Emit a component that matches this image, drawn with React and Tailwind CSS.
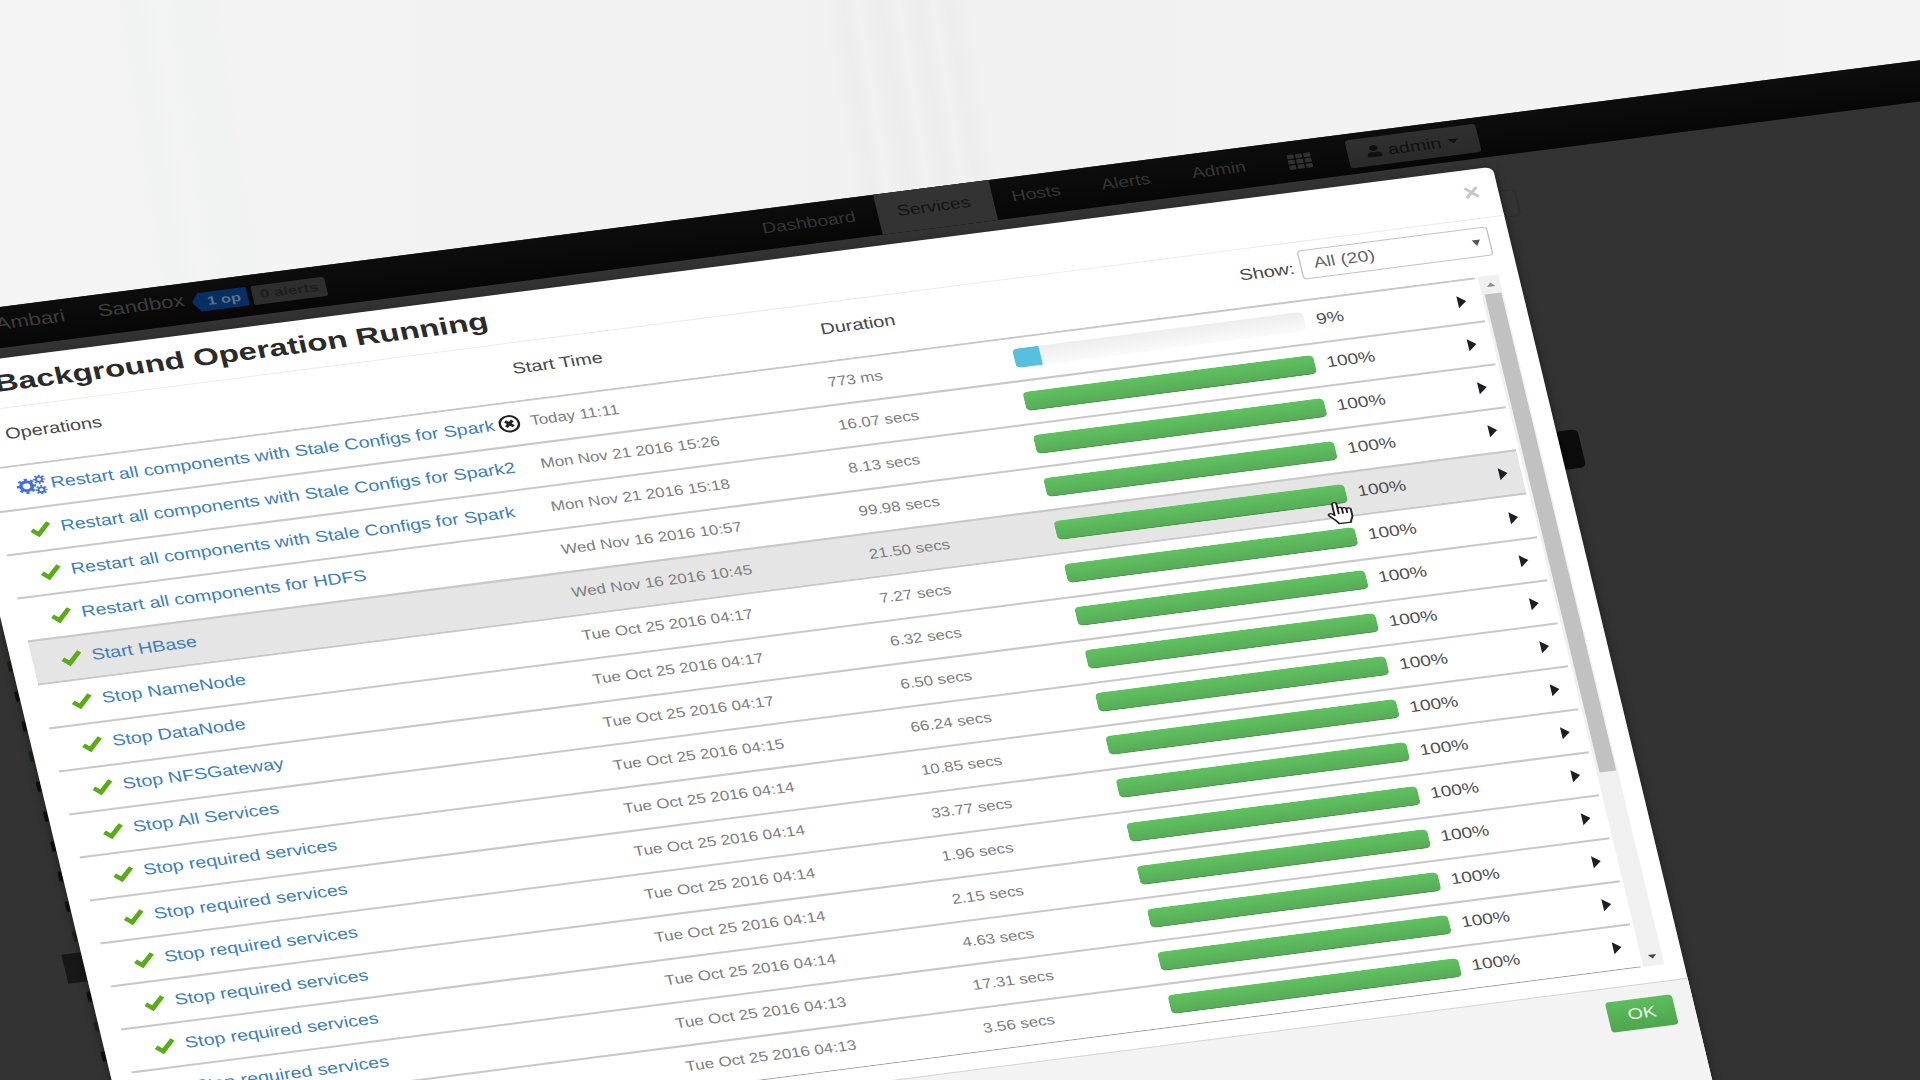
import React from "react";
import { FaTh, FaUser } from "react-icons/fa";

const operations = [
  ["Restart all components with Stale Configs for Spark", "Today 11:11", "773 ms", 9],
  ["Restart all components with Stale Configs for Spark2", "Mon Nov 21 2016 15:26", "16.07 secs", 100],
  ["Restart all components with Stale Configs for Spark", "Mon Nov 21 2016 15:18", "8.13 secs", 100],
  ["Restart all components for HDFS", "Wed Nov 16 2016 10:57", "99.98 secs", 100],
  ["Start HBase", "Wed Nov 16 2016 10:45", "21.50 secs", 100],
  ["Stop NameNode", "Tue Oct 25 2016 04:17", "7.27 secs", 100],
  ["Stop DataNode", "Tue Oct 25 2016 04:17", "6.32 secs", 100],
  ["Stop NFSGateway", "Tue Oct 25 2016 04:17", "6.50 secs", 100],
  ["Stop All Services", "Tue Oct 25 2016 04:15", "66.24 secs", 100],
  ["Stop required services", "Tue Oct 25 2016 04:14", "10.85 secs", 100],
  ["Stop required services", "Tue Oct 25 2016 04:14", "33.77 secs", 100],
  ["Stop required services", "Tue Oct 25 2016 04:14", "1.96 secs", 100],
  ["Stop required services", "Tue Oct 25 2016 04:14", "2.15 secs", 100],
  ["Stop required services", "Tue Oct 25 2016 04:14", "4.63 secs", 100],
  ["Stop required services", "Tue Oct 25 2016 04:13", "17.31 secs", 100],
  ["Stop required services", "Tue Oct 25 2016 04:13", "3.56 secs", 100],
];

function AbortIcon() {
  return (
    <svg viewBox="0 0 16 16" preserveAspectRatio="none" className="ml-[3.500px] h-[17.500px] w-[15.500px] shrink-0" fill="none" stroke="#222">
      <circle cx="8" cy="8" r="7" strokeWidth="1.8" />
      <path d="M5.300 5.300l5.400 5.400M10.700 5.300l-5.400 5.400" strokeWidth="2.500" />
    </svg>
  );
}

function CheckIcon() {
  return (
    <svg viewBox="0 0 16 14" preserveAspectRatio="none" className="h-[16.500px] w-[16px]" fill="none" stroke="#58ad14" strokeWidth="3.500">
      <path d="M1.600 7.300l4.300 4L14.300 2.500" strokeLinejoin="miter" />
    </svg>
  );
}

function Gear({ cx, cy, r, ring, tooth }) {
  const step = (2 * Math.PI * (r + ring / 2 + 0.5)) / 16;
  return (
    <g>
      <circle cx={cx} cy={cy} r={r} strokeWidth={ring} />
      <circle cx={cx} cy={cy} r={r + ring / 2 + 0.5} strokeWidth={tooth} strokeDasharray={`${step} ${step}`} strokeDashoffset={step / 2} />
    </g>
  );
}

function GearsIcon() {
  return (
    <svg viewBox="0 0 21 18" preserveAspectRatio="none" className="h-[20.500px] w-[22px]" fill="none" stroke="#426fe4">
      <Gear cx={7} cy={9} r={3.8} ring={2.5} tooth={2} />
      <Gear cx={16.4} cy={4.4} r={2.1} ring={1.5} tooth={1.5} />
      <Gear cx={16.4} cy={13.6} r={2.1} ring={1.5} tooth={1.5} />
    </svg>
  );
}

function HandCursor() {
  return (
    <svg
      viewBox="0 0 18 24"
      preserveAspectRatio="none"
      className="absolute left-[1035px] top-[355px] h-[23.500px] w-[19px]"
      fill="#fff"
      stroke="#222"
      strokeWidth="1.3"
      strokeLinejoin="round"
      strokeLinecap="round"
    >
      <path d="M5 14V2.600a1.500 1.500 0 0 1 3 0V8a1.400 1.400 0 0 1 2.900 0v.6a1.400 1.400 0 0 1 2.900 .2v.7a1.400 1.400 0 0 1 2.900 .3V16c0 2.200-1.600 3.400-1.800 6.500H6.600C6.200 19.500 2.800 16.500 1.200 13.300c-.6-1.500 1.200-2.500 2.400-1.200z" />
      <path d="M8 8.500v4M10.900 9V12.500M13.800 9.800V12.500" />
    </svg>
  );
}

function NavBar() {
  return (
    <nav className="flex h-[40px] w-full bg-gradient-to-b from-[#0d0d0d] to-[#070707] text-[13.700px] text-[#353535]">
      <div className="flex w-[677px] shrink-0 items-start pl-[138px] pt-[7px] text-[15.700px] leading-[20px] text-[#3d3d3d]">
        <span className="w-[73.500px] origin-[0_80%] scale-y-108">Ambari</span>
        <span className="w-[67px] origin-[0_80%] scale-y-108">Sandbox</span>
        <span className="mt-[3.500px] flex h-[19px] w-[40px] items-center justify-center whitespace-nowrap bg-[#062f63] pl-[6px] text-[11.700px] font-bold text-[#5e7288] [clip-path:polygon(0_50%,14%_0,100%_0,100%_100%,14%_100%)]">
          1 op
        </span>
        <span className="ml-[3.500px] mt-[3.500px] flex h-[19px] w-[53px] items-center justify-center rounded-[2px] bg-[#2e2e2e] text-[12px] font-bold text-[#1f1f1f]">
          0 alerts
        </span>
      </div>
      <div className="flex shrink-0 leading-[40px]">
        <span className="w-[95px] pl-[12px]"><span className="inline-block origin-[0_65%] scale-y-110">Dashboard</span></span>
        <span className="w-[83px] bg-[#333] pl-[14px] text-[#131313]"><span className="inline-block origin-[0_65%] scale-y-110">Services</span></span>
        <span className="w-[64.500px] pl-[13.500px]"><span className="inline-block origin-[0_65%] scale-y-110">Hosts</span></span>
        <span className="w-[65px] pl-[13.500px]"><span className="inline-block origin-[0_65%] scale-y-110">Alerts</span></span>
        <span className="w-[72px] pl-[13.500px]"><span className="inline-block origin-[0_65%] scale-y-110">Admin</span></span>
        <span className="flex w-[53px] items-center pl-[10px] text-[#303030]">
          <FaTh size={17} />
        </span>
        <span className="mt-[6px] flex h-[28px] w-[94px] items-center rounded-[3px] bg-gradient-to-b from-[#303030] to-[#2a2a2a] pl-[13px] text-[14px] text-[#101010]">
          <FaUser size={12} />
          <span className="ml-[4.500px] scale-y-106">admin</span>
          <span className="ml-[4.500px] border-x-[4px] border-t-[4px] border-x-transparent border-t-[#101010]" />
        </span>
      </div>
    </nav>
  );
}

function PageEdges() {
  const marks = ["#1a2610", "#101010", "#101010", "#1a2610", "#101010", "#101010", "#101010", "#101010", "#101010", "#1a2610", "#101010", "#101010", "#1a2610", "#101010", "#101010"];
  return (
    <div className="flex">
      <div className="flex w-[92px] flex-col items-end gap-[20px] pt-[305px]">
        {marks.map((color, i) =>
          i === 10 ? (
            <div key={i} className="-my-[9.500px] h-[29px] w-[14px] shrink-0 bg-[#181818]" />
          ) : (
            <div key={i} className="h-[10px] w-[3.500px] shrink-0 rounded-l-[1px]" style={{ backgroundColor: color }} />
          )
        )}
      </div>
      <div className="ml-[1117px] flex w-[16px] flex-col">
        <div className="mt-[34px] h-[27px] w-[12px] rounded-r border border-[#2d2d2d]" />
        <div className="mt-[214px] h-[38px] w-[15px] rounded-r-[4px] bg-[#0c0c0c]" />
      </div>
    </div>
  );
}

function OperationRow({ item, index }) {
  const [name, started, duration, percent] = item;
  const running = percent < 100;
  return (
    <div
      className={
        "grid h-[43.100px] shrink-0 grid-cols-[388px_214px_134.500px_208px_111px_1fr] items-center border-t-2 border-[#c8c8c8] pb-px " +
        (index === 4 ? "bg-[#e5e5e5]" : "bg-white")
      }
    >
      <div className="flex items-center whitespace-nowrap text-[13.970px] text-[#3c80b9]">
        <span className={running ? "flex w-[43px] pl-[18.500px]" : "flex w-[42.700px] pl-[20.500px]"}>
          {running ? <GearsIcon /> : <CheckIcon />}
        </span>
        <span className="origin-[0_75%] scale-y-110">{name}</span>
        {running && <AbortIcon />}
      </div>
      <span className="origin-[0_75%] scale-y-114 whitespace-nowrap text-[12.050px] text-[#7e7e7e]">{started}</span>
      <span className="origin-[0_75%] scale-y-114 whitespace-nowrap text-[12px] text-[#7e7e7e]">{duration}</span>
      <div className="mb-[2px] h-[19px] w-[208.500px] overflow-hidden rounded-[4px] bg-gradient-to-b from-[#ededed] to-[#fafafa]">
        <div
          className={
            "h-full " +
            (running
              ? "bg-[#57bfdf]"
              : "bg-gradient-to-b from-[#60c260] to-[#57ab57] shadow-[inset_0_-1px_0_rgba(0,0,0,0.15)]")
          }
          style={{ width: percent + "%" }}
        />
      </div>
      <span className="origin-[0_75%] scale-y-110 pl-[9px] text-[13.600px] text-[#505050]">{percent}%</span>
      <span className="h-0 w-0 border-y-[6.500px] border-l-[6.500px] border-y-transparent border-l-[#1d1d24]" />
    </div>
  );
}

function ScrollBar() {
  return (
    <div className="ml-[2px] flex w-[15px] flex-col items-center bg-[#f0f0f0]">
      <div className="flex h-[18px] items-center">
        <span className="border-x-[3.500px] border-b-[4px] border-x-transparent border-b-[#8a8a8a]" />
      </div>
      <div className="h-[478px] w-[12.500px] bg-[#c1c1c1]" />
      <div className="mt-auto flex h-[18px] items-center">
        <span className="border-x-[3.500px] border-t-[4px] border-x-transparent border-t-[#444]" />
      </div>
    </div>
  );
}

function OperationsDialog() {
  return (
    <section className="absolute left-[91.700px] top-[50px] flex h-[1050px] w-[1117.600px] flex-col rounded-[6px] bg-white shadow-[0_3px_8px_rgba(0,0,0,0.45)]">
      <header className="flex h-[48.500px] shrink-0 items-center justify-between border-b border-[#ececec] pl-[35.500px] pr-[13.500px]">
        <h1 className="pt-px text-[23.400px] font-bold leading-[30px] text-[#2b2b2b]">Background Operation Running</h1>
        <span className="-mt-[4px] scale-y-115 text-[20px] font-bold leading-none text-[#c6c6c6]">×</span>
      </header>
      <div className="flex h-[56.500px] shrink-0 pl-[34.500px] text-[14.200px] leading-[20px] text-[#484848]">
        <span className="w-[365px] origin-[0_30px] scale-y-108 pt-[15px]">Operations</span>
        <span className="w-[221.500px] origin-[0_30px] scale-y-108 pt-[15px]">Start Time</span>
        <span className="w-[301.500px] origin-[0_30px] scale-y-108 pt-[15px]">Duration</span>
        <span className="w-[43.500px] origin-[0_30px] scale-y-108 pt-[15px]">Show:</span>
        <div className="mt-[8px] flex h-[29px] w-[137px] items-center justify-between rounded-[3px] border border-[#c4c4c4] pl-[9.500px] pr-[6px] pt-px text-[13.800px] text-[#666]">
          <span className="origin-[0_75%] scale-y-108">All (20)</span>
          <span className="border-x-[3.500px] border-t-[6px] border-x-transparent border-t-[#555]" />
        </div>
      </div>
      <div className="ml-[15.200px] flex h-[690px] shrink-0">
        <div className="flex w-[1071.500px] flex-col overflow-hidden border-b border-[#999]">
          {operations.map((item, index) => (
            <OperationRow key={index} item={item} index={index} />
          ))}
        </div>
        <ScrollBar />
      </div>
      <footer className="mt-[15.500px] flex grow items-start justify-end border-t border-[#d6d6d6] bg-[#f3f3f3] pr-[14px] pt-[13px]">
        <button className="h-[30px] w-[48px] rounded-[3px] bg-gradient-to-b from-[#5dbd5d] to-[#4da64d] text-[14px] text-[#eefbee]">
          <span className="inline-block scale-y-108">OK</span>
        </button>
      </footer>
    </section>
  );
}

export default function App() {
  return (
    <main className="relative h-[1080px] w-[1920px] overflow-hidden bg-gradient-to-r from-[#f4f4f4] via-[#f1f1f1] to-[#f3f3f3] [font-family:'Liberation_Sans',Arial,sans-serif]">
      <div className="flex h-[320px] w-full origin-top skew-x-[9deg]">
        <div className="ml-[110px] w-[130px] bg-[linear-gradient(90deg,transparent,#f1f2f2_20%,#f4f4f4_35%,#f1f2f2_55%,transparent)]" />
        <div className="ml-[580px] w-[150px] bg-[linear-gradient(90deg,transparent,#eeeeee_15%,#f1f1f1_25%,#ededed_40%,#f1f1f1_52%,#ededed_65%,#f1f1f1_75%,#eeeeee_85%,transparent)]" />
      </div>
      <div className="absolute left-0 top-0 h-[1150px] w-[1700px] origin-top-left bg-[#333] [transform:matrix(1.39,-0.1786,0.2405,1,-200,332.7)]">
        <NavBar />
        <PageEdges />
        <OperationsDialog />
        <HandCursor />
      </div>
    </main>
  );
}
